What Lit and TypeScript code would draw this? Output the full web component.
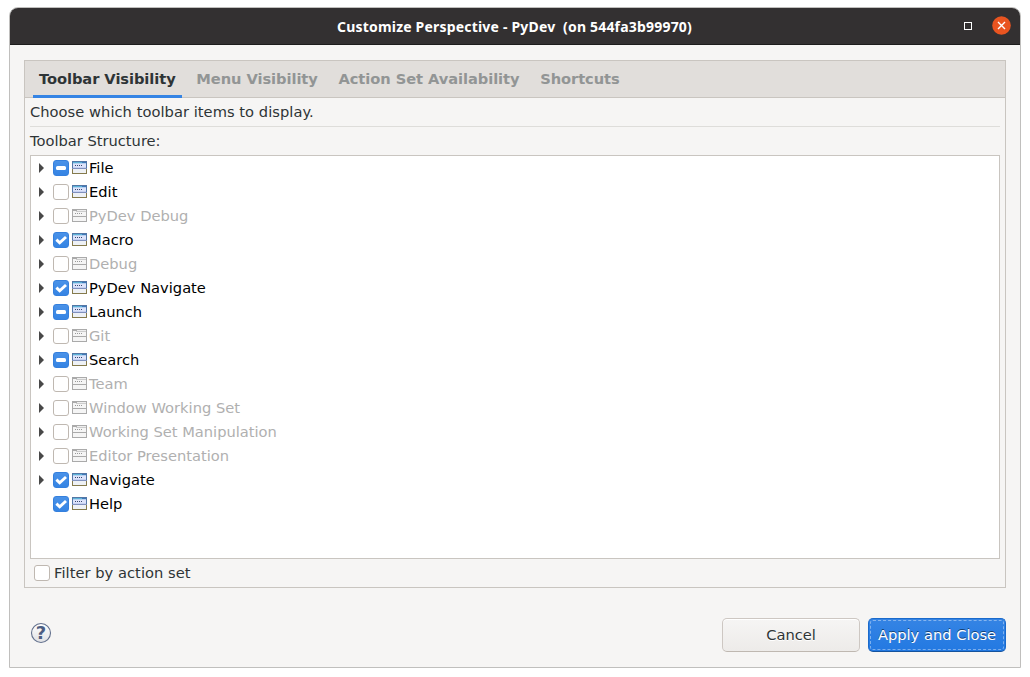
import { LitElement, html, css, svg } from "lit";
import { customElement, property, state } from "lit/decorators.js";
import { classMap } from "lit/directives/class-map.js";

type CheckState = "on" | "off" | "mixed";
interface Item { label: string; check: CheckState; grey?: boolean; leaf?: boolean }

const ITEMS: Item[] = [
  { label: "File", check: "mixed" },
  { label: "Edit", check: "off" },
  { label: "PyDev Debug", check: "off", grey: true },
  { label: "Macro", check: "on" },
  { label: "Debug", check: "off", grey: true },
  { label: "PyDev Navigate", check: "on" },
  { label: "Launch", check: "mixed" },
  { label: "Git", check: "off", grey: true },
  { label: "Search", check: "mixed" },
  { label: "Team", check: "off", grey: true },
  { label: "Window Working Set", check: "off", grey: true },
  { label: "Working Set Manipulation", check: "off", grey: true },
  { label: "Editor Presentation", check: "off", grey: true },
  { label: "Navigate", check: "on" },
  { label: "Help", check: "on", leaf: true },
];

const TABS = ["Toolbar Visibility", "Menu Visibility", "Action Set Availability", "Shortcuts"];

@customElement("check-box")
export class CheckBox extends LitElement {
  @property() value: CheckState = "off";
  static styles = css`
    :host { display: block; width: 16px; height: 16px; flex: none; }
    .box {
      box-sizing: border-box; width: 16px; height: 16px; border: 1px solid #bfb8b1;
      border-radius: 3px; background: #fff;
    }
    .box.filled { border-color: #3580dd; background: linear-gradient(#4a92e8, #3584e4); }
    svg { display: block; width: 14px; height: 14px; }
  `;
  render() {
    const mark =
      this.value === "mixed" ? svg`<rect x="2" y="5" width="10" height="4" rx="1.5" fill="#fff"/>`
      : this.value === "on" ? svg`<path d="M2.4 6.6 L5.7 9.8 L12 4" fill="none" stroke="#fff" stroke-width="2.9"/>`
      : null;
    return html`<div class=${classMap({ box: true, filled: this.value !== "off" })}>
      <svg viewBox="0 0 14 14">${mark}</svg></div>`;
  }
}

@customElement("tree-row")
export class TreeRow extends LitElement {
  @property({ attribute: false }) item!: Item;
  static styles = css`
    :host { display: flex; align-items: center; height: 24px; color: #000; }
    .arrow { width: 6px; height: 10px; margin: 0 9px 0 7px; flex: none; }
    .icon { width: 15px; height: 13px; margin: 0 2px 1px 3px; flex: none; }
    .label { white-space: pre; line-height: 24px; }
    .grey { color: #b0b0b0; }
  `;
  render() {
    const { label, check, grey, leaf } = this.item;
    return html`
      <svg class="arrow" viewBox="0 0 6 10">${leaf ? null : svg`<path d="M1 0 L6 5 L1 10Z" fill="#484848"/>`}</svg>
      <check-box .value=${check}></check-box>
      ${grey ? this.greyIcon() : this.colorIcon()}
      <span class=${classMap({ label: true, grey: !!grey })}>${label}</span>`;
  }
  private dots(fill: string) {
    return [3, 5, 7, 9].map((x) => svg`<rect x=${x} y="4" width="1" height="1" fill=${fill}/>`);
  }
  private colorIcon() {
    return html`<svg class="icon" viewBox="0 0 15 13" shape-rendering="crispEdges">
      <rect width="15" height="8" fill="#5477a6"/>
      <rect y="8" width="15" height="5" fill="#857a4c"/>
      <rect x="1" y="1" width="9" height="1" fill="#5cb4d8"/>
      <rect x="10" y="1" width="4" height="1" fill="#3f78b8"/>
      <rect x="1" y="2" width="13" height="1" fill="#b5d0f0"/>
      <rect x="1" y="3" width="13" height="4" fill="#dde3fa"/>
      <rect x="1" y="6" width="13" height="1" fill="#c8d2f2"/>
      <rect y="7" width="15" height="1" fill="#8191bd"/>
      <rect x="1" y="8" width="13" height="4" fill="#eef1f5"/>
      ${this.dots("#39486f")}
    </svg>`;
  }
  private greyIcon() {
    return html`<svg class="icon" viewBox="0 0 15 13" shape-rendering="crispEdges">
      <rect width="15" height="13" fill="#aaa"/>
      <rect x="5" y="1" width="9" height="1" fill="#eee"/>
      <rect x="1" y="2" width="13" height="5" fill="#f5f5f5"/>
      <rect x="4" y="2" width="10" height="1" fill="#ccc"/>
      <rect x="1" y="8" width="13" height="4" fill="#f5f5f5"/>
      ${this.dots("#999")}
    </svg>`;
  }
}

@customElement("app-root")
export class AppRoot extends LitElement {
  @state() private active = 0;
  static styles = css`
    :host {
      display: block; box-sizing: border-box; width: 1030px; height: 677px;
      padding: 7px 9px 9px; background: #fff; overflow: hidden;
      font: 14.667px/20px "DejaVu Sans", sans-serif; color: #2e3436;
    }
    .window {
      box-sizing: border-box; width: 1012px; height: 661px; border: 1px solid #c0bfbd;
      border-radius: 9px 9px 0 0; background: #f6f5f4; overflow: hidden;
      display: flex; flex-direction: column;
    }
    .title {
      box-sizing: border-box; height: 37px; flex: none; background: #333031;
      border-bottom: 1px solid #1d1c1c; color: #fff;
      display: grid; grid-template-columns: 1fr auto 1fr; align-items: center;
    }
    .caption {
      font: bold 14px/20px "Noto Sans", "Open Sans", sans-serif; white-space: pre;
      letter-spacing: 0.19px; padding: 2px 1px 0 0;
    }
    .controls {
      display: flex; justify-content: flex-end; align-items: center; gap: 20px;
      padding: 0 9px 1px 0;
    }
    .max { box-sizing: border-box; width: 8px; height: 8px; border: 1px solid #fff; }
    .close { width: 19px; height: 19px; }
    .body { flex: 1; padding: 15px 14px 0; display: flex; flex-direction: column; }
    .folder {
      box-sizing: border-box; height: 528px; border: 1px solid #c9c5c0;
      display: flex; flex-direction: column;
    }
    .tabs {
      box-sizing: border-box; height: 37px; flex: none; background: #e1dedb;
      border-bottom: 1px solid #c9c5c0; display: flex; padding-left: 8px; gap: 8.7px;
    }
    .tab {
      box-sizing: border-box; height: 37px; padding: 8px 6px 0; font-weight: bold; color: #929595;
      white-space: nowrap; cursor: default; letter-spacing: -0.07px;
    }
    .tab.active { color: #2e3436; border-bottom: 3px solid #3584e4; }
    .page { flex: 1; padding: 0 5px; display: flex; flex-direction: column; }
    .intro { height: 24px; padding-top: 4px; border-bottom: 1px solid #deddda; letter-spacing: 0.04px; }
    .heading { height: 24px; padding-top: 4px; }
    .tree { box-sizing: border-box; height: 404px; border: 1px solid #c9c5c0; background: #fff; }
    .filter {
      display: flex; align-items: center; gap: 4px; height: 28px; padding-left: 4px;
      letter-spacing: 0.04px;
    }
    .footer { display: flex; align-items: center; padding-top: 30px; gap: 8px; }
    .help { width: 22px; height: 22px; margin: -4px auto 0 6px; }
    .q { font: bold 18px "DejaVu Sans", sans-serif; }
    .button {
      box-sizing: border-box; width: 138px; height: 34px; border: 1px solid #cdc7c2; border-bottom-color: #bfb8b1;
      border-radius: 5px; background: linear-gradient(#f6f5f4, #edebe9); text-align: center;
      line-height: 32px; box-shadow: inset 0 1px #fff; text-shadow: 0 1px #fff; white-space: nowrap;
    }
    .primary {
      border-color: #1b6acb; border-bottom-color: #15539e; color: #fff; padding: 1px;
      background: linear-gradient(#3584e4, #2379e2); text-shadow: 0 -1px rgba(0, 0, 0, 0.5);
      box-shadow: none;
    }
    .focus {
      box-sizing: border-box; height: 30px; border: 1px dashed rgba(255, 255, 255, 0.4);
      border-radius: 3px; line-height: 28px;
    }
  `;
  render() {
    return html`<div class="window">
      <div class="title">
        <span></span>
        <span class="caption">Customize Perspective - PyDev  (on 544fa3b99970)</span>
        <div class="controls">
          <span class="max"></span>
          <svg class="close" viewBox="0 0 19 19">
            <circle cx="9.5" cy="9.5" r="9.3" fill="#e95420"/>
            <path d="M6 6 L13 13 M13 6 L6 13" stroke="#fff" stroke-width="1.4"/>
          </svg>
        </div>
      </div>
      <div class="body">
        <div class="folder">
          <div class="tabs">
            ${TABS.map((t, i) => html`<span class=${classMap({ tab: true, active: i === this.active })}
              @click=${() => (this.active = i)}>${t}</span>`)}
          </div>
          <div class="page">
            <div class="intro">Choose which toolbar items to display.</div>
            <div class="heading">Toolbar Structure:</div>
            <div class="tree">${ITEMS.map((i) => html`<tree-row .item=${i}></tree-row>`)}</div>
            <div class="filter"><check-box></check-box><span>Filter by action set</span></div>
          </div>
        </div>
        <div class="footer">
          <svg class="help" viewBox="0 0 22 22">
            <defs><linearGradient id="g" x2="0" y2="1"><stop stop-color="#fff"/><stop offset="1" stop-color="#dfe0e3"/></linearGradient></defs>
            <circle cx="11" cy="11" r="9.5" fill="url(#g)" stroke="#62708d" stroke-width="1.1"/>
            <text class="q" x="11" y="17.4" text-anchor="middle" fill="#4c5d82">?</text>
          </svg>
          <div class="button">Cancel</div>
          <div class="button primary"><div class="focus">Apply and Close</div></div>
        </div>
      </div>
    </div>`;
  }
}
